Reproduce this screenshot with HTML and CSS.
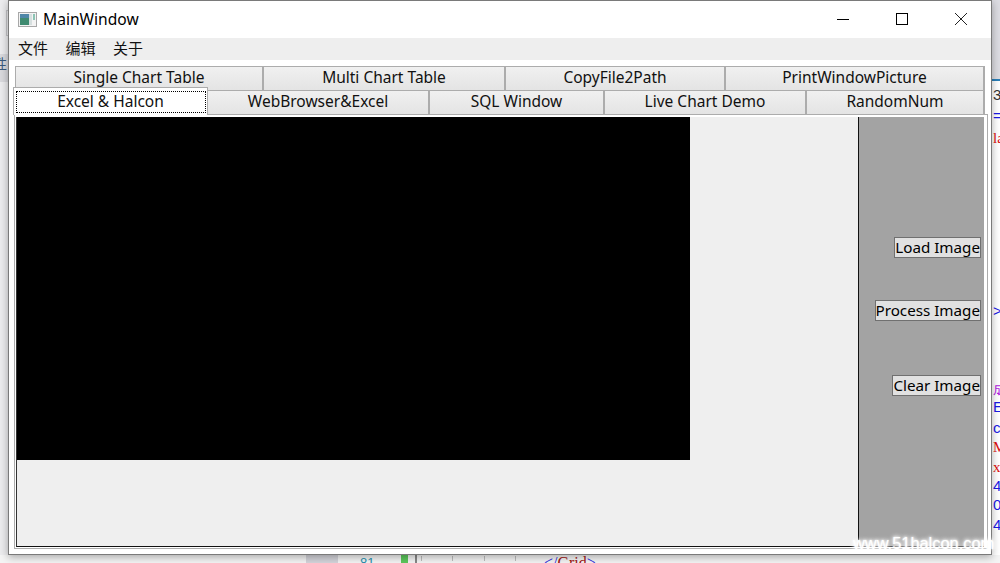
FILE: index.html
```html
<!DOCTYPE html>
<html lang="zh">
<head>
<meta charset="utf-8">
<title>MainWindow</title>
<link rel="stylesheet" href="styles.css">
</head>
<body>
<div class="desktop">
  <div class="bg-left">
    <span class="left-box"></span>
    <span class="left-band"></span>
    <span class="side-char">性</span>
  </div>
  <div class="bg-right">
    <span class="right-top"></span>
    <span class="right-blue"></span>
    <span class="code c-dark l1">3</span>
    <span class="code c-blue l2">=</span>
    <span class="code c-red l3">la</span>
    <span class="code c-blue l4">&gt;</span>
    <span class="code c-purple l5">成</span>
    <span class="code c-blue l6">E</span>
    <span class="code c-blue l7">c</span>
    <span class="code c-red l8">M</span>
    <span class="code c-red l9">x</span>
    <span class="code c-blue l10">4</span>
    <span class="code c-blue l11">0</span>
    <span class="code c-blue l12">4</span>
  </div>
  <div class="bg-bottom">
    <span class="gutter"></span>
    <span class="line-no">81</span>
    <span class="green-bar"></span>
    <span class="rule"></span>
    <span class="tick t1"></span>
    <span class="tick t2"></span>
    <span class="tick t3"></span>
    <span class="tick t4"></span>
    <span class="xml"><span class="xml-b">&lt;/</span>Grid<span class="xml-b">&gt;</span></span>
  </div>

  <main class="window">
    <header class="titlebar">
      <svg class="app-icon" width="19" height="15" viewBox="0 0 19 15" aria-hidden="true">
        <rect x="0.5" y="0.5" width="18" height="14" fill="#f3f3f3" stroke="#a8a8a8"/>
        <rect x="2" y="2" width="9" height="11" fill="#3f8a70"/>
        <rect x="2" y="2" width="9" height="4" fill="#4f87a8"/>
        <rect x="11" y="2" width="3" height="11" fill="#d6dfdf"/>
        <rect x="15" y="2" width="2" height="6" fill="#8cc4b4"/>
      </svg>
      <span class="title">MainWindow</span>
      <div class="win-controls">
        <svg class="ctl" width="12" height="12" viewBox="0 0 12 12" aria-hidden="true"><path d="M0 6.5H12" stroke="#000" fill="none"/></svg>
        <svg class="ctl" width="12" height="12" viewBox="0 0 12 12" aria-hidden="true"><rect x="0.5" y="0.5" width="11" height="11" stroke="#000" fill="none"/></svg>
        <svg class="ctl" width="12" height="12" viewBox="0 0 12 12" aria-hidden="true"><path d="M0 0L12 12M12 0L0 12" stroke="#222" fill="none"/></svg>
      </div>
    </header>
    <nav class="menubar">
      <span class="menu-item">文件</span>
      <span class="menu-item">编辑</span>
      <span class="menu-item">关于</span>
    </nav>
    <section class="client">
      <div class="tabrow row-a">
        <div class="tab w248">Single Chart Table</div>
        <div class="tab w242">Multi Chart Table</div>
        <div class="tab w220">CopyFile2Path</div>
        <div class="tab w260">PrintWindowPicture</div>
      </div>
      <div class="tabrow row-b">
        <div class="tab selected"><span class="focus">Excel &amp; Halcon</span></div>
        <div class="tab w222">WebBrowser&amp;Excel</div>
        <div class="tab w175">SQL Window</div>
        <div class="tab w202">Live Chart Demo</div>
        <div class="tab w179">RandomNum</div>
      </div>
      <div class="pane">
        <div class="pane-inner">
          <div class="left-area">
            <div class="image-view"></div>
          </div>
          <aside class="side">
            <button class="btn load">Load Image</button>
            <button class="btn process">Process Image</button>
            <button class="btn clear">Clear Image</button>
          </aside>
        </div>
      </div>
    </section>
  </main>

  <div class="watermark">www.51halcon.com</div>
</div>
</body>
</html>
```

FILE: styles.css
```css
* { box-sizing: border-box; }
html, body { margin: 0; padding: 0; }
body {
  width: 1000px;
  height: 563px;
  overflow: hidden;
  font-family: "Noto Sans", "Noto Sans CJK SC", sans-serif;
}
.desktop {
  position: relative;
  width: 1000px;
  height: 563px;
  overflow: hidden;
  background: #f0f0f2;
}
.bg-left {
  position: absolute;
  left: 0; top: 0;
  width: 9px; height: 556px;
  background: #ececee;
  overflow: hidden;
}
.left-box {
  position: absolute;
  left: 6px; top: 10px;
  width: 3px; height: 26px;
  border: 1px solid #c4c4c8;
}
.left-band {
  position: absolute;
  left: 0; top: 54px;
  width: 9px; height: 28px;
  background: #d9d9dd;
}
.side-char {
  position: absolute;
  left: -7px; top: 55px;
  font-size: 14px;
  line-height: 18px;
  color: #3a5a7c;
}
.bg-right {
  position: absolute;
  left: 992px; top: 0;
  width: 8px; height: 563px;
  background: #fff;
  overflow: hidden;
}
.right-top {
  position: absolute;
  left: 0; top: 0;
  width: 8px; height: 79px;
  background: #dcdce2;
}
.right-blue {
  position: absolute;
  left: 0; top: 79px;
  width: 8px; height: 2px;
  background: #2a7fb8;
}
.code {
  position: absolute;
  left: 1px;
  font: 15px/16px "Liberation Sans", sans-serif;
}
.c-dark { color: #333; }
.c-blue { color: #1a1ae6; }
.c-red { color: #e01010; }
.c-purple { color: #b020e0; }
.l1 { top: 87px; font-size: 15px; }
.l2 { top: 108px; }
.l3 { top: 130px; font-family: "Liberation Serif", serif; }
.l4 { top: 303px; }
.l5 { top: 381px; font-size: 14px; }
.l6 { top: 399px; }
.l7 { top: 420px; }
.l8 { top: 439px; font-family: "Liberation Serif", serif; }
.l9 { top: 459px; font-family: "Liberation Serif", serif; }
.l10 { top: 478px; }
.l11 { top: 497px; }
.l12 { top: 517px; }
.bg-bottom {
  position: absolute;
  left: 0; right: 0; top: 555px;
  height: 8px;
  background: #f4f4f4;
  overflow: hidden;
}
.gutter { position: absolute; left: 306px; top: 0; width: 32px; height: 8px; background: #d4d4da; }
.line-no { position: absolute; left: 360px; top: 1px; font: 13px/14px "Liberation Sans", sans-serif; color: #2b91af; }
.green-bar { position: absolute; left: 401px; top: 0; width: 7px; height: 8px; background: #5cc85c; }
.rule { position: absolute; left: 415px; top: 0; width: 2px; height: 8px; background: #888; }
.tick { position: absolute; top: 1px; width: 1px; height: 5px; background: #bdbdbd; }
.t1 { left: 421px; }
.t2 { left: 452px; }
.t3 { left: 484px; }
.t4 { left: 515px; }
.xml { position: absolute; left: 544px; top: 0; font: 16px/16px "Liberation Serif", serif; color: #a31515; }
.xml-b { color: #2a2ae0; }

.window {
  position: absolute;
  left: 8px; top: 0;
  width: 984px; height: 555px;
  border: 1px solid #7a7a7a;
  background: #fff;
  box-shadow: 0 2px 8px rgba(0,0,0,.32);
  display: flex;
  flex-direction: column;
}
.titlebar {
  height: 37px;
  flex: none;
  display: flex;
  align-items: center;
  padding: 0 0 0 9px;
  background: #fff;
}
.app-icon { margin-right: 6px; }
.title { font-size: 15.6px; line-height: 20px; margin-top: -1px; color: #000; }
.win-controls { margin-left: auto; display: flex; align-items: center; gap: 47px; padding: 0 24px 1px 0; }
.menubar {
  height: 22px;
  flex: none;
  display: flex;
  align-items: center;
  gap: 17.5px;
  padding: 0 0 3px 9px;
  background: #eee;
  font-size: 15px;
  color: #111;
}
.client { flex: 1; padding: 6px 5px 5px 6px; background: #fff; display: flex; flex-direction: column; }
.tabrow { display: flex; height: 24px; flex: none; }
.tab {
  height: 25px;
  border: 1px solid #acacac;
  margin-right: -1px;
  padding-bottom: 3px;
  background: linear-gradient(#f0f0f0, #e4e4e4);
  display: flex;
  align-items: center;
  justify-content: center;
  font-size: 15.5px;
  color: #111;
}
.w248 { width: 249px; }
.w242 { width: 243px; }
.w220 { width: 221px; }
.w260 { width: 260px; }
.w222 { width: 223px; }
.w175 { width: 176px; }
.w202 { width: 203px; }
.w179 { width: 179px; }
.row-a { position: relative; }
.row-a .tab { border-right-width: 2px; }
.row-b { position: relative; }
.row-b .tab { border-right-width: 2px; }
.row-b .tab.selected { border-right-width: 1px; }
.selected {
  position: relative;
  z-index: 2;
  width: 195px;
  height: 28px;
  margin-left: -2px;
  margin-top: -3px;
  padding: 2px;
  background: #fff;
  border-bottom: 0;
}
.focus {
  flex: 1;
  height: 22px;
  border: 1px dotted #000;
  display: flex;
  align-items: center;
  justify-content: center;
  padding: 0 1px 2px 0;
  margin-right: -1px;
}
.pane {
  flex: 1;
  border: 1px solid #acacac;
  margin: 0 -2px 0 -1px;
  padding: 2px 3px 1px 1px;
  background: #fff;
}
.pane-inner {
  height: 100%;
  display: flex;
  border-left: 1px solid #333;
  border-bottom: 1px solid #111;
  background: #efefef;
}
.left-area { flex: 1; }
.image-view { width: 673px; height: 343px; background: #000; }
.side {
  width: 126px;
  flex: none;
  border-left: 1px solid #111;
  background: #a3a3a3;
  display: flex;
  flex-direction: column;
  align-items: flex-end;
  padding: 120px 3px 0 0;
}
.btn {
  height: 21px;
  padding: 0;
  border: 1px solid #707070;
  background: #e1e1e1;
  font: 15.2px/17px "Noto Sans", sans-serif;
  color: #000;
}
.process { margin-top: 42px; }
.clear { margin-top: 54px; }
.watermark {
  position: absolute;
  left: 853px; top: 533px;
  font: 400 16.4px/20px "Liberation Sans", sans-serif;
  color: #fff;
  text-shadow: 0 0 2px #fff, 0 0 4px #fff, 0 0 5px #fff;
}
```
